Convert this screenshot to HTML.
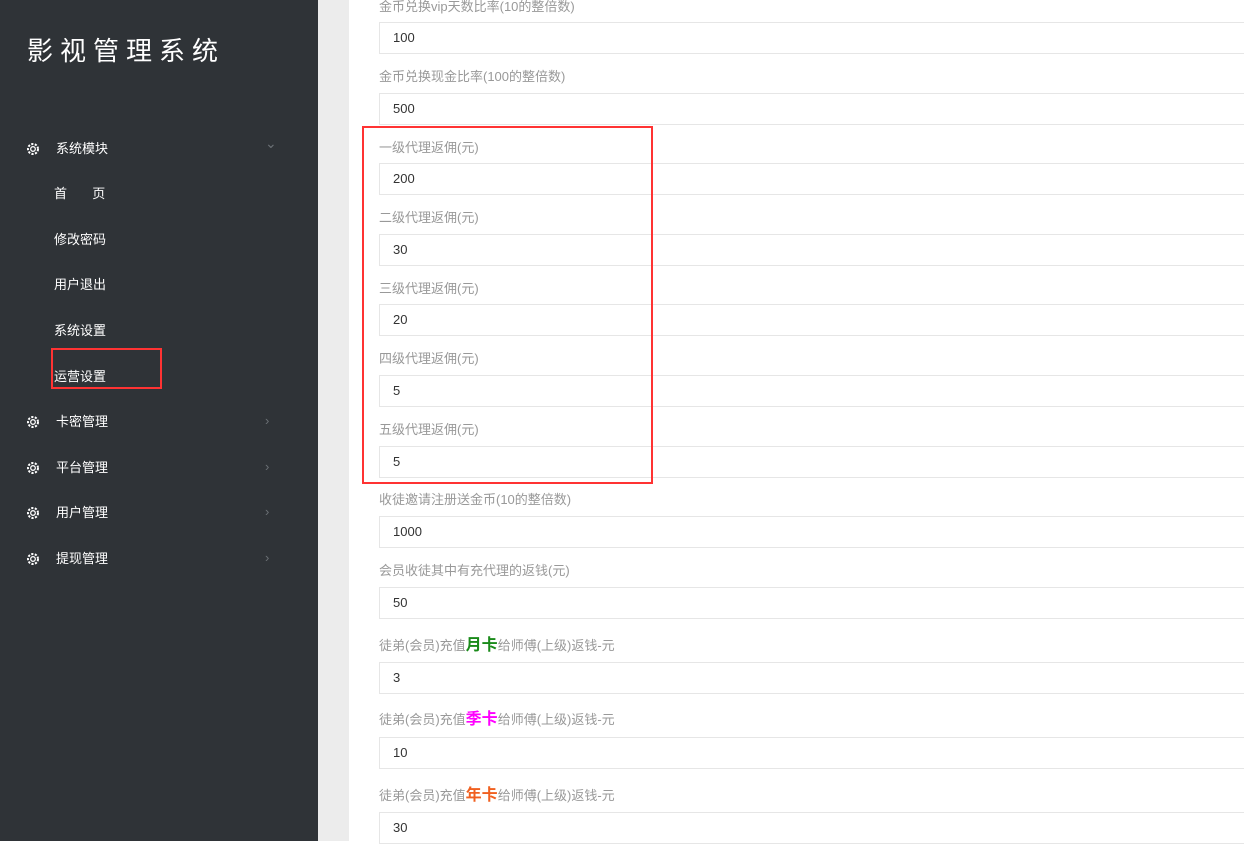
<!DOCTYPE html>
<html><head><meta charset="utf-8"><style>
*{margin:0;padding:0;box-sizing:border-box}
body{width:1244px;height:841px;overflow:hidden;background:#fff;font-family:"Liberation Sans","Noto Sans CJK SC",sans-serif;position:relative}
#side{position:absolute;left:0;top:0;width:318px;height:841px;background:#2f3337;color:#fff}
#gap{position:absolute;left:318px;top:0;width:31px;height:841px;background:#ececec}
.title{position:absolute;left:27px;top:31px;font-size:26px;letter-spacing:7px;color:#fff}
.nav{position:absolute;left:56px;font-size:13px;color:#fff;line-height:16px}
.sub{position:absolute;left:54px;font-size:13px;color:#fff;line-height:16px}
.ic{position:absolute;left:26px;width:14px;height:14px}
.arr{position:absolute;left:265px;font-size:11px;color:#6b7075}
.lbl{position:absolute;left:379px;font-size:13px;color:#999;line-height:16px;height:16px}
.inp{position:absolute;left:379px;width:880px;height:32px;border:1px solid #e6e6e6;font-size:13px;color:#333;padding-left:13px;line-height:30px}
.red{position:absolute;border:2px solid #f33}
</style></head><body>
<div id="side">
<div class="title">影视管理系统</div>
</div>
<div id="gap"></div>
<div id="items"></div>
<script>
var s=document.getElementById('side');
function gear(y){return '<svg class="ic" style="top:'+y+'px" viewBox="0 0 14 14"><circle cx="7" cy="7" r="5" fill="none" stroke="#fff" stroke-width="2" stroke-dasharray="2.2 1.4"/><circle cx="7" cy="7" r="2.3" fill="none" stroke="#fff" stroke-width="1.3"/></svg>';}
var h='';
[['系统模块',149,'⌄'],['卡密管理',422,'›'],['平台管理',468,'›'],['用户管理',513,'›'],['提现管理',559,'›']].forEach(function(a){
h+=gear(a[1]-7)+'<div class="nav" style="top:'+(a[1]-8)+'px">'+a[0]+'</div><div class="arr" style="top:'+(a[1]-(a[2]=='⌄'?14:9))+'px;font-size:'+(a[2]=='⌄'?14:13)+'px">'+a[2]+'</div>';});
[['首&nbsp;&nbsp;&nbsp;&nbsp;&nbsp;&nbsp;&nbsp;页',194],['修改密码',240],['用户退出',285],['系统设置',331],['运营设置',377]].forEach(function(a){h+='<div class="sub" style="top:'+(a[1]-8)+'px">'+a[0]+'</div>';});
h+='<div class="red" style="left:51px;top:348px;width:111px;height:41px"></div>';
s.innerHTML+=h;
var f=[['金币兑换vip天数比率(10的整倍数)',7,22,'100'],['金币兑换现金比率(100的整倍数)',77,93,'500'],['一级代理返佣(元)',148,163,'200'],['二级代理返佣(元)',218,234,'30'],['三级代理返佣(元)',289,304,'20'],['四级代理返佣(元)',359,375,'5'],['五级代理返佣(元)',430,446,'5'],['收徒邀请注册送金币(10的整倍数)',500,516,'1000'],['会员收徒其中有充代理的返钱(元)',571,587,'50'],
['徒弟(会员)充值<b style="color:#1a8a1a;font-size:16px">月卡</b>给师傅(上级)返钱-元',646,662,'3'],['徒弟(会员)充值<b style="color:#f0f;font-size:16px">季卡</b>给师傅(上级)返钱-元',720,737,'10'],['徒弟(会员)充值<b style="color:#f06020;font-size:16px">年卡</b>给师傅(上级)返钱-元',796,812,'30']];
var o='';
f.forEach(function(a){o+='<div class="lbl" style="top:'+(a[1]-8)+'px">'+a[0]+'</div><div class="inp" style="top:'+a[2]+'px">'+a[3]+'</div>';});
o+='<div class="red" style="left:362px;top:126px;width:291px;height:358px"></div>';
document.getElementById('items').innerHTML=o;
</script>
</body></html>
